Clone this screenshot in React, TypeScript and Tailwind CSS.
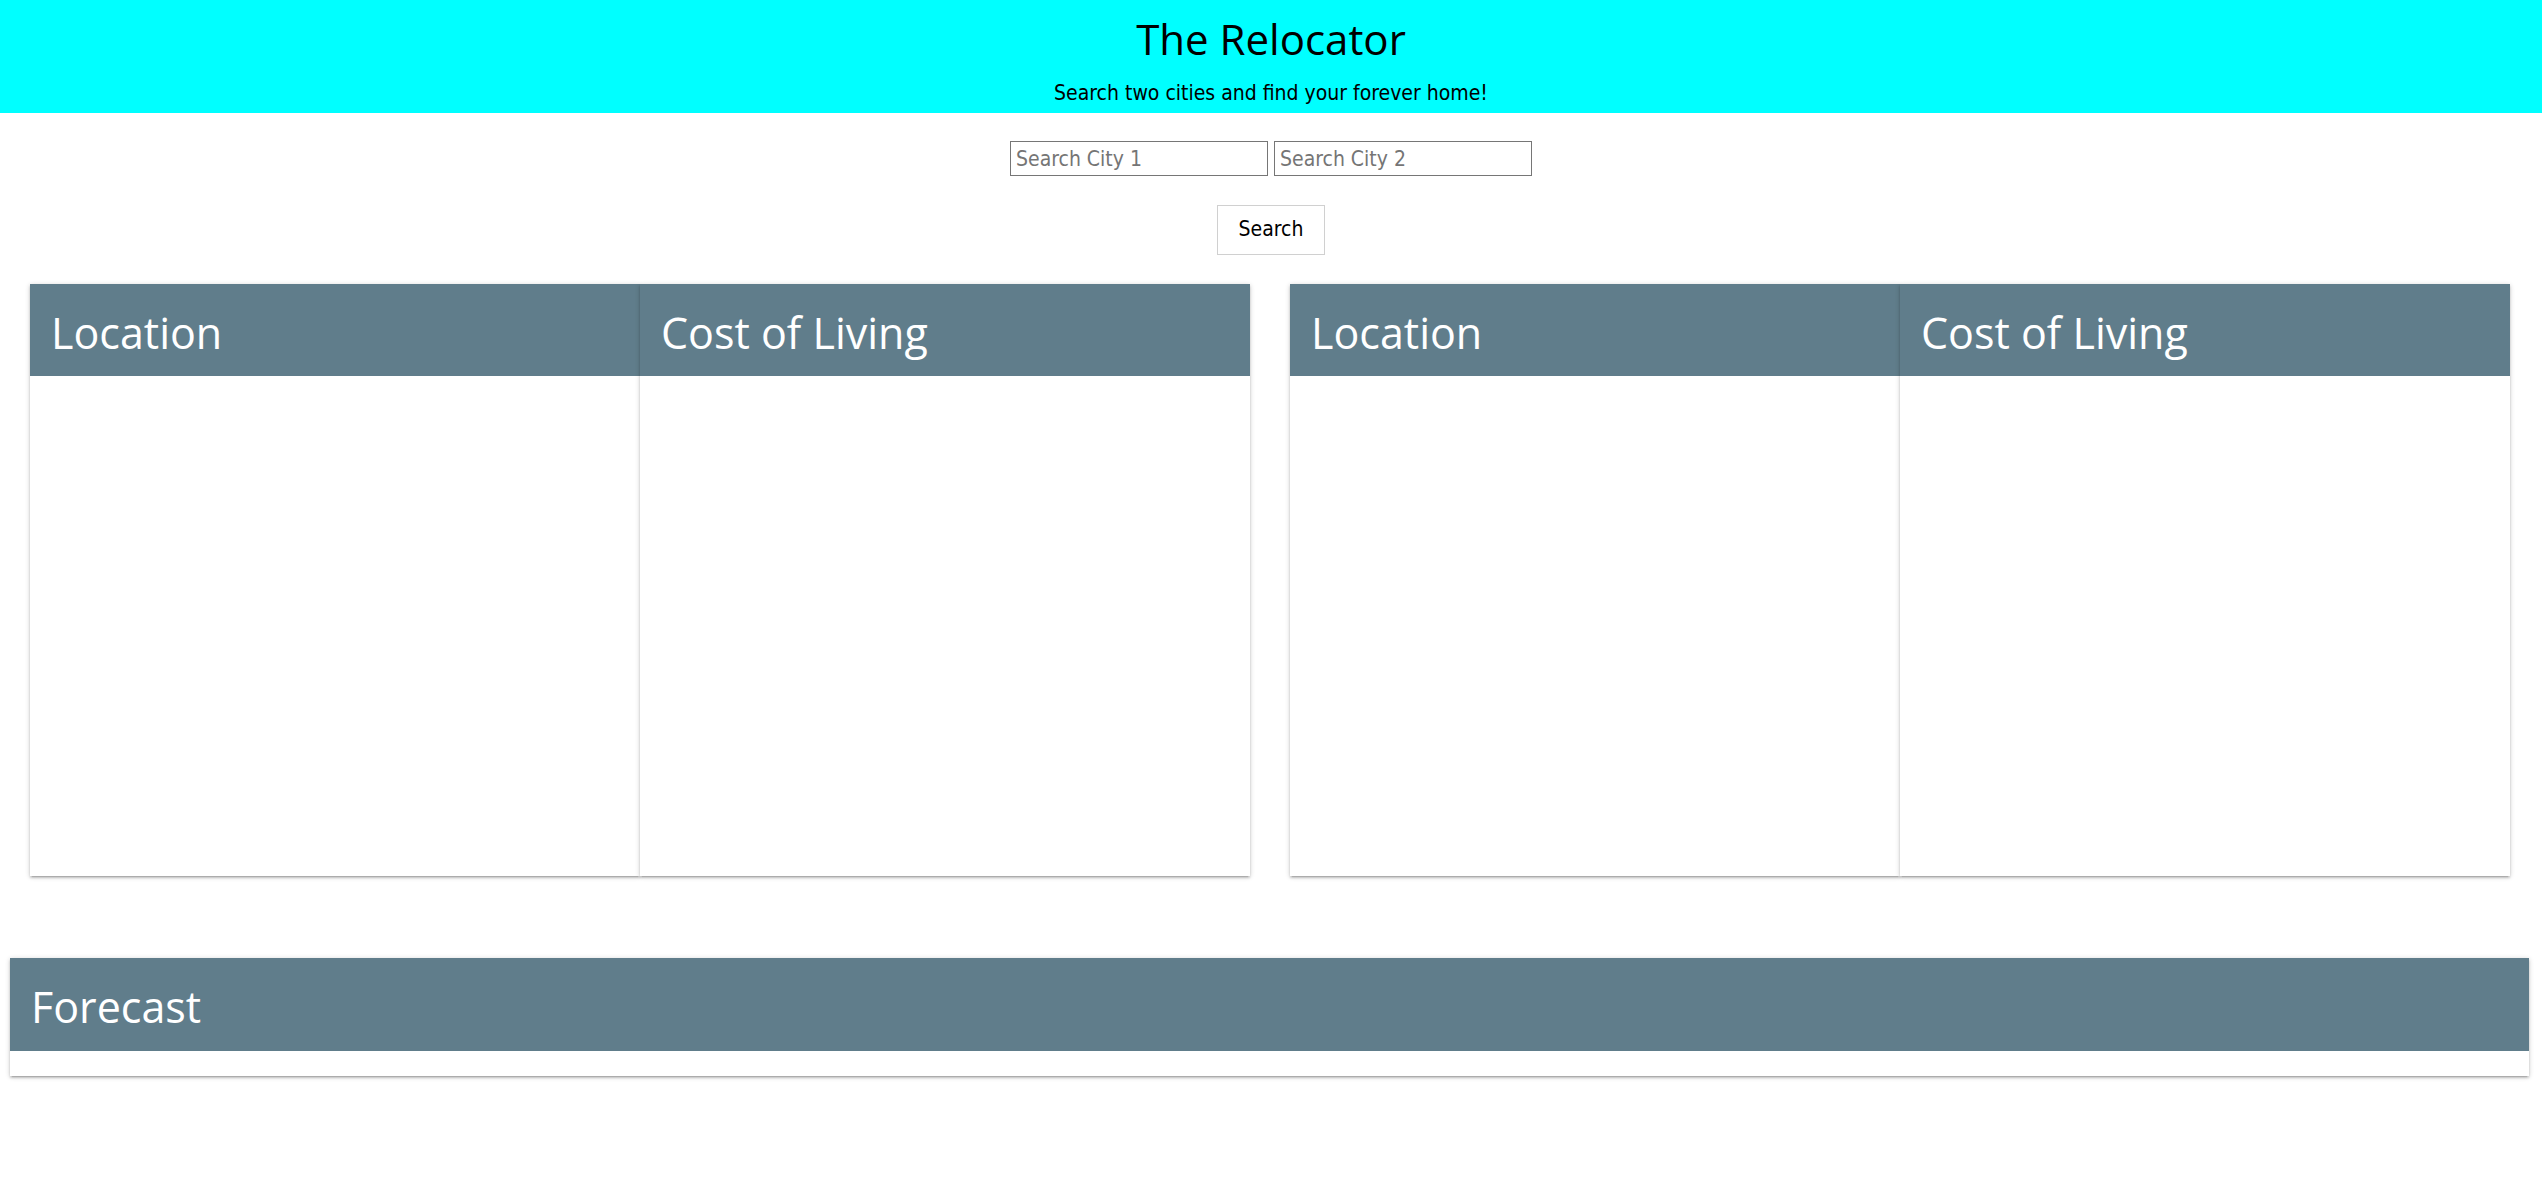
import React from 'react';

const cardShadow =
  'shadow-[0_2px_2px_0_rgba(0,0,0,0.14),0_3px_1px_-2px_rgba(0,0,0,0.12),0_1px_5px_0_rgba(0,0,0,0.2)]';

function Card({ title }: { title: string }) {
  return (
    <div className={`flex-1 bg-white ${cardShadow}`}>
      <div className="h-[92px] bg-[#607d8b] pl-[21px] pt-[6px] text-[43px] leading-[86px] text-white font-['Open_Sans',sans-serif]">
        {title}
      </div>
      <div className="h-[500px]" />
    </div>
  );
}

function CityGroup() {
  return (
    <div className="flex flex-1">
      <Card title="Location" />
      <Card title="Cost of Living" />
    </div>
  );
}

export default function App() {
  return (
    <div className="min-h-[1188px] bg-white">
      {/* Header */}
      <header className="bg-[#00ffff] pt-[11px] pb-[8px] text-center text-black">
        <h1 className="text-[42px] leading-[56px] font-['Open_Sans',sans-serif]">The Relocator</h1>
        <p className="mt-[14px] text-[21px] leading-[24px] font-['DejaVu_Sans_Condensed','DejaVu_Sans',sans-serif]">
          Search two cities and find your forever home!
        </p>
      </header>

      {/* Search form */}
      <div className="flex flex-col items-center pt-[28px]">
        <div className="flex gap-[6px]">
          <input
            type="text"
            placeholder="Search City 1"
            className="h-[35px] w-[258px] border border-[#767676] px-[5px] text-[21px] placeholder:text-[#757575] font-['DejaVu_Sans_Condensed','DejaVu_Sans',sans-serif]"
          />
          <input
            type="text"
            placeholder="Search City 2"
            className="h-[35px] w-[258px] border border-[#767676] px-[5px] text-[21px] placeholder:text-[#757575] font-['DejaVu_Sans_Condensed','DejaVu_Sans',sans-serif]"
          />
        </div>
        <button className="mt-[29px] h-[50px] w-[108px] border border-[#d0d0d0] bg-white text-[21px] text-black font-['DejaVu_Sans_Condensed','DejaVu_Sans',sans-serif]">
          Search
        </button>
      </div>

      {/* City cards */}
      <div className="flex gap-[40px] pl-[30px] pr-[32px] pt-[29px]">
        <CityGroup />
        <CityGroup />
      </div>

      {/* Forecast */}
      <div className="pl-[10px] pr-[13px] pt-[82px]">
        <div className={`bg-white ${cardShadow}`}>
          <div className="h-[93px] bg-[#607d8b] pl-[21px] pt-[6px] text-[43px] leading-[86px] text-white font-['Open_Sans',sans-serif]">
            Forecast
          </div>
          <div className="h-[25px]" />
        </div>
      </div>
    </div>
  );
}
